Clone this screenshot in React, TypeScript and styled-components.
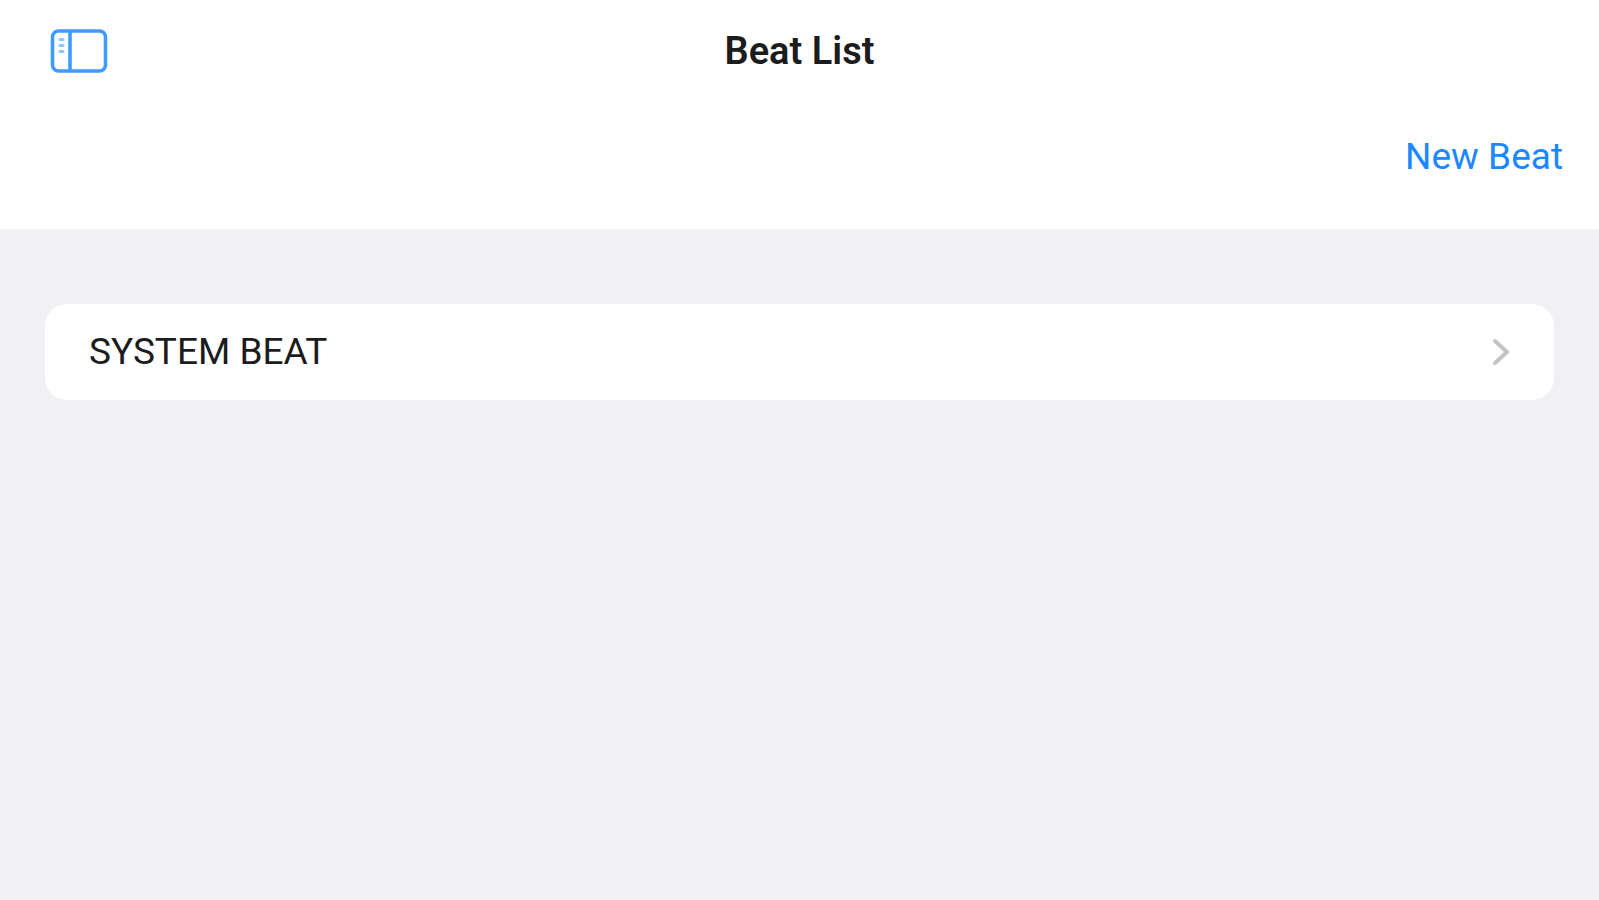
import React from "react";
import styled, { createGlobalStyle } from "styled-components";

const GlobalStyle = createGlobalStyle`
  * { box-sizing: border-box; }
  body {
    margin: 0;
    background: #f0f0f5;
    color: #1c1c1e;
    font-family: Roboto, "Liberation Sans", sans-serif;
    font-size: 37px;
    line-height: 48px;
  }
`;

const Header = styled.header`
  background: #fff;
  border-bottom: 1px solid #f7f7fa;
  padding-bottom: 48px;
`;

const NavBar = styled.div`
  display: grid;
  grid-template-columns: 1fr auto 1fr;
  align-items: center;
  height: 101px;
  padding: 0 48px;
`;

const IconButton = styled.button`
  justify-self: start;
  display: flex;
  padding: 0;
  border: 0;
  background: none;
  color: #409bff;
  cursor: pointer;
`;

const Title = styled.h1`
  margin: 0;
  font-size: 38px;
  font-weight: 600;
`;

const ActionBar = styled.div`
  display: flex;
  justify-content: flex-end;
  padding: 32px 36px 0;
`;

const TextButton = styled.button`
  padding: 0;
  border: 0;
  background: none;
  color: #1b88ff;
  font: inherit;
  cursor: pointer;
`;

const List = styled.ul`
  margin: 0;
  padding: 74px 45px;
  list-style: none;
`;

const Row = styled.a`
  display: flex;
  align-items: center;
  justify-content: space-between;
  height: 96px;
  padding: 0 44px;
  border-radius: 22px;
  background: #fff;
  color: inherit;
  text-decoration: none;
`;

const SidebarIcon = () => (
  <svg width="62" height="48" viewBox="0 0 62 48" fill="none" stroke="currentColor" aria-hidden="true">
    <rect x="4.5" y="4" width="53" height="40" rx="6" strokeWidth="3.6" />
    <path d="M22 4v40" strokeWidth="3.6" />
    <path d="M12 12.5h3M12 18.5h3M12 24.5h3" strokeWidth="3" strokeLinecap="round" opacity="0.6" />
  </svg>
);

const Chevron = () => (
  <svg width="18" height="28" viewBox="0 0 18 28" fill="none" stroke="#c4c4c6" strokeWidth="4" strokeLinecap="round" strokeLinejoin="round" aria-hidden="true">
    <path d="M3 3l12 11L3 25" />
  </svg>
);

const beats = ["SYSTEM BEAT"];

export default function App() {
  return (
    <>
      <GlobalStyle />
      <Header>
        <NavBar>
          <IconButton type="button" aria-label="Toggle sidebar">
            <SidebarIcon />
          </IconButton>
          <Title>Beat List</Title>
        </NavBar>
        <ActionBar>
          <TextButton type="button">New Beat</TextButton>
        </ActionBar>
      </Header>
      <main>
        <List>
          {beats.map((name) => (
            <li key={name}>
              <Row href="#">
                {name}
                <Chevron />
              </Row>
            </li>
          ))}
        </List>
      </main>
    </>
  );
}
